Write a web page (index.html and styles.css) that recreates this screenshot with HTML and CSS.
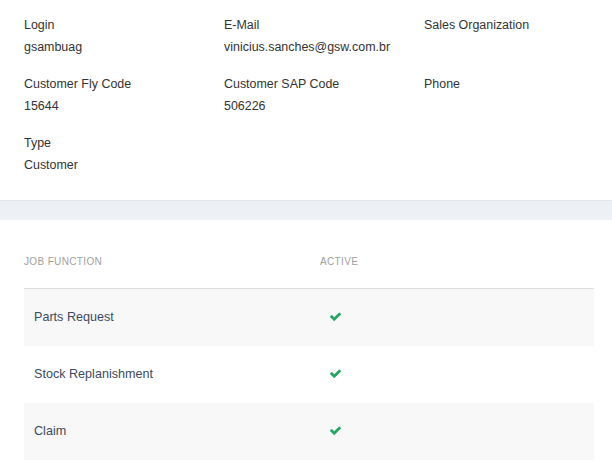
FILE: index.html
```html
<!DOCTYPE html>
<html>
<head>
<meta charset="utf-8">
<link rel="stylesheet" href="styles.css">
</head>
<body>
<section class="info">
  <div class="field"><div class="label">Login</div><div class="value">gsambuag</div></div>
  <div class="field"><div class="label">E-Mail</div><div class="value">vinicius.sanches@gsw.com.br</div></div>
  <div class="field"><div class="label">Sales Organization</div><div class="value"></div></div>
  <div class="field"><div class="label">Customer Fly Code</div><div class="value">15644</div></div>
  <div class="field"><div class="label">Customer SAP Code</div><div class="value">506226</div></div>
  <div class="field"><div class="label">Phone</div><div class="value"></div></div>
  <div class="field"><div class="label">Type</div><div class="value">Customer</div></div>
</section>
<div class="band"></div>
<section class="jobs">
  <table class="table">
    <thead>
      <tr><th class="col-name">Job Function</th><th>Active</th></tr>
    </thead>
    <tbody>
      <tr class="odd"><td>Parts Request</td><td><svg class="check" viewBox="121 270 1550 1256"><path d="M1671 566q0 40-28 68l-724 724-136 136q-28 28-68 28t-68-28l-136-136-362-362q-28-28-28-68t28-68l136-136q28-28 68-28t68 28l294 295 656-657q28-28 68-28t68 28l136 136q28 28 28 68z"/></svg></td></tr>
      <tr><td>Stock Replanishment</td><td><svg class="check" viewBox="121 270 1550 1256"><path d="M1671 566q0 40-28 68l-724 724-136 136q-28 28-68 28t-68-28l-136-136-362-362q-28-28-28-68t28-68l136-136q28-28 68-28t68 28l294 295 656-657q28-28 68-28t68 28l136 136q28 28 28 68z"/></svg></td></tr>
      <tr class="odd"><td>Claim</td><td><svg class="check" viewBox="121 270 1550 1256"><path d="M1671 566q0 40-28 68l-724 724-136 136q-28 28-68 28t-68-28l-136-136-362-362q-28-28-28-68t28-68l136-136q28-28 68-28t68 28l294 295 656-657q28-28 68-28t68 28l136 136q28 28 28 68z"/></svg></td></tr>
    </tbody>
  </table>
</section>
</body>
</html>
```
FILE: styles.css
```css
html, body {
  margin: 0;
  padding: 0;
  background: #ffffff;
  font-family: "Liberation Sans", Arial, sans-serif;
}
.info {
  display: grid;
  grid-template-columns: 200px 200px 200px;
  row-gap: 15px;
  padding: 14px 24px 24px;
  color: #333333;
  font-size: 12.45px;
}
.label, .value {
  line-height: 22px;
  height: 22px;
  white-space: nowrap;
}
.band {
  height: 19px;
  background: #edf1f5;
  border-top: 1px solid #e1e6eb;
}
.jobs {
  padding: 20px 18px 0 24px;
}
.table {
  width: 100%;
  border-collapse: collapse;
}
.table th {
  text-align: left;
  font-weight: normal;
  text-transform: uppercase;
  font-size: 10px;
  letter-spacing: 0.35px;
  color: #a0a0a0;
  padding: 16px 0 20px;
  line-height: 12px;
  border-bottom: 1px solid #dddddd;
}
.table th.col-name {
  width: 296px;
}
.table td {
  height: 55px;
  padding: 0 10px 2px;
  font-size: 12.6px;
  color: #3c4a5d;
  vertical-align: middle;
}
.table tr.odd td {
  background: #f8f8f8;
}
.check {
  display: block;
  width: 11px;
  height: 9px;
  fill: #27a562;
}
```
